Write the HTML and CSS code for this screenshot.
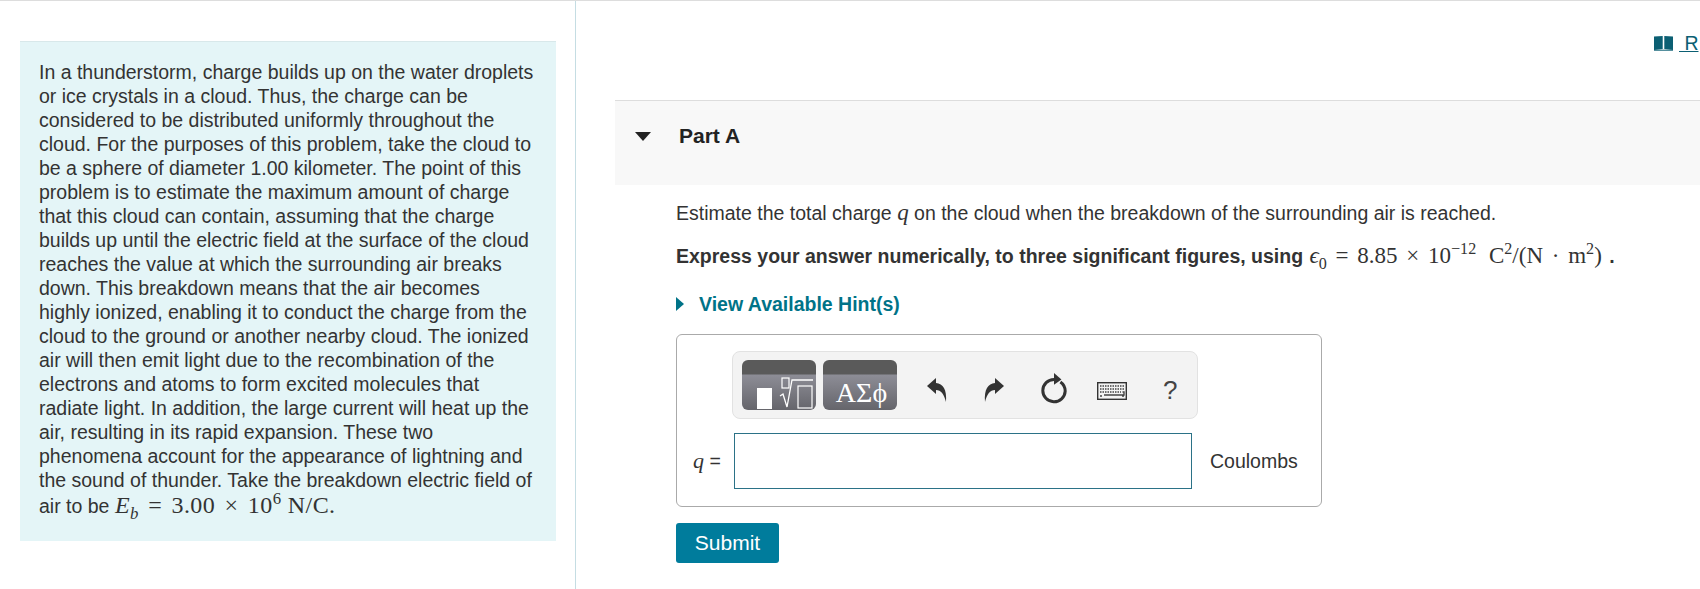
FILE: index.html
```html
<!DOCTYPE html>
<html lang="en">

<head>
    <meta charset="UTF-8">
    <meta name="viewport" content="width=device-width, initial-scale=1.0">
    <title>Part A</title>
    <link rel="stylesheet" href="styles.css">
</head>

<body>
    <div class="layout">
        <aside class="intro-col">
            <div class="intro">
                In a thunderstorm, charge builds up on the water droplets or ice crystals in a cloud. Thus, the charge can be considered to be distributed uniformly throughout the cloud. For the purposes of this problem, take the cloud to be a sphere of diameter 1.00 kilometer. The point of this problem is to estimate the maximum amount of charge that this cloud can contain, assuming that the charge builds up until the electric field at the surface of the cloud reaches the value at which the surrounding air breaks down. This breakdown means that the air becomes highly ionized, enabling it to conduct the charge from the cloud to the ground or another nearby cloud. The ionized air will then emit light due to the recombination of the electrons and atoms to form excited molecules that radiate light. In addition, the large current will heat up the air, resulting in its rapid expansion. These two phenomena account for the appearance of lightning and the sound of thunder. Take the breakdown electric field of air to be <span class="math math-big"><i>E<sub>b</sub></i> <span class="op">=</span> 3.00 <span class="op">×</span> 10<sup>6</sup> N/C.</span>
            </div>
        </aside>

        <main class="main-col">
            <div class="review-row">
                <svg class="book" viewBox="0 0 19 16" width="19" height="16">
                    <path d="M0 1.5 L8.7 1 V14 L0 15 Z M10.3 1 L19 1.5 V15 L10.3 14 Z" fill="#0b5f73" />
                    <path d="M0 15.2 H19" stroke="#0b5f73" stroke-width="1" />
                </svg>
                <a class="review-link" href="#">&nbsp;R</a>
            </div>

            <section class="part">
                <div class="part-head">
                    <span class="arrow-down"></span>
                    <h2>Part A</h2>
                </div>

                <div class="part-body">
                    <p class="question">Estimate the total charge <i class="math q">q</i> on the cloud when the breakdown of the surrounding air is reached.</p>
                    <p class="instruction"><b>Express your answer numerically, to three significant figures, using</b> <span class="math formula"><i>ϵ</i><sub>0</sub> <span class="op">=</span> 8.85 <span class="op">×</span> 10<sup>−12</sup> <span class="unit">C<sup>2</sup>/(N <span class="op-dot">·</span> m<sup>2</sup>)</span></span> <b class="period">.</b></p>
                    <a class="hint" href="#"><span class="arrow-right"></span>View Available Hint(s)</a>

                    <div class="answer-box">
                        <div class="toolbar">
                            <div class="tool-btn">
                                <svg viewBox="0 0 74 36" width="74" height="36">
                                    <rect x="15" y="14" width="15" height="21" fill="#fff" />
                                    <rect x="40" y="4" width="7" height="10" fill="none" stroke="#fff" stroke-width="1.2" />
                                    <path d="M38 22 L41 20 L45 33 L50 6 H71" fill="none" stroke="#fff" stroke-width="1.3" />
                                    <rect x="56" y="12" width="14" height="22" fill="none" stroke="#fff" stroke-width="1.2" />
                                </svg>
                            </div>
                            <div class="tool-btn"><span class="greek">ΑΣϕ</span></div>

                            <svg class="tool-icon undo" viewBox="0 0 22 26" width="22" height="26">
                                <path d="M1 9 L10 1 V6 C17 7 21 12 20 25 C18 17 15 13 10 13 V17 Z" fill="#333" />
                            </svg>
                            <svg class="tool-icon redo" viewBox="0 0 22 26" width="22" height="26">
                                <path d="M21 9 L12 1 V6 C5 7 1 12 2 25 C4 17 7 13 12 13 V17 Z" fill="#333" />
                            </svg>
                            <svg class="tool-icon reset" viewBox="0 0 26 30" width="28" height="32">
                                <path d="M13 6 A10.500 10.500 0 1 0 23.500 17 A10.500 10.500 0 0 0 19 8.500" fill="none" stroke="#333" stroke-width="2.800" />
                                <path d="M13 0 L20 6 L13 11 Z" fill="#333" />
                            </svg>
                            <svg class="tool-icon keys" viewBox="0 0 30 18" width="30" height="18">
                                <rect x="0.700" y="0.700" width="28.600" height="16.600" fill="none" stroke="#333" stroke-width="1.400" />
                                <path d="M3 4 H27 M3 7 H27 M3 10 H24" stroke="#444" stroke-width="1.500" stroke-dasharray="1.500 1" />
                                <path d="M25.500 10 H27 V13 H7 M3 14 H5 M25 14 H27" stroke="#444" stroke-width="1.400" fill="none" />
                            </svg>
                            <span class="help">?</span>
                        </div>

                        <div class="answer-row">
                            <label class="answer-label" for="answer"><i class="math">q</i> =</label>
                            <input type="text" id="answer" class="answer-input">
                            <span class="units">Coulombs</span>
                        </div>
                    </div>

                    <button type="button" class="submit">Submit</button>
                </div>
            </section>
        </main>
    </div>
</body>

</html>
```

FILE: styles.css
```css
html, body {
    height: 100%;
    margin: 0;
}

body {
    font-family: "Liberation Sans", Arial, sans-serif;
    font-size: 19.5px;
    line-height: 24px;
    color: #333;
    background-color: #fff;
    overflow: hidden;
}

.layout {
    display: flex;
    height: 100%;
    border-top: 1px solid #ddd;
    box-sizing: border-box;
}

.intro-col {
    width: 576px;
    flex: none;
    box-sizing: border-box;
    padding: 40px 19px 0 20px;
    border-right: 1px solid #c5dde3;
}

.intro {
    background-color: #e4f5f7;
    border-top: 1px solid #d8e8ea;
    padding: 18px 20px 19px 19px;
    height: 500px;
    box-sizing: border-box;
}

.math {
    font-family: "Liberation Serif", "Times New Roman", serif;
    font-size: 22px;
}

.math-big {
    font-size: 24px;
    letter-spacing: 0.4px;
    line-height: 27px;
}

.formula {
    font-size: 23px;
    margin-left: 1px;
}

.unit {
    margin-left: 7px;
}

.period {
    margin-left: 2px;
}

.math sub,
.math sup {
    font-size: 70%;
    line-height: 0;
}

.op {
    margin: 0 3px;
}

.op-dot {
    margin: 0 3px;
}

.q {
    font-size: 23px;
}

.main-col {
    flex: 1;
    min-width: 0;
    overflow: hidden;
    padding-left: 39px;
}

.review-row {
    height: 99px;
    display: flex;
    align-items: flex-start;
    padding-left: 1039px;
    box-sizing: border-box;
    padding-top: 30px;
    white-space: nowrap;
}

.book {
    flex: none;
    margin-top: 4px;
}

.review-link {
    color: #0b5f73;
    margin-left: 6px;
}

.part-head {
    display: flex;
    align-items: flex-start;
    height: 85px;
    box-sizing: border-box;
    background-color: #f8f8f8;
    border-top: 1px solid #ddd;
    padding: 23px 0 0 20px;
}

.part-head h2 {
    margin: 0;
    font-size: 21px;
    line-height: 24px;
    font-weight: bold;
    color: #222;
    margin-left: 28px;
}

.arrow-down {
    width: 0;
    height: 0;
    margin-top: 8px;
    border-left: 8.500px solid transparent;
    border-right: 8.500px solid transparent;
    border-top: 9px solid #222;
}

.part-body {
    padding-left: 61px;
}

.question {
    margin: 16px 0 0;
}

.instruction {
    margin: 19px 0 0;
    white-space: nowrap;
}

.hint {
    display: flex;
    align-items: center;
    margin-top: 24px;
    color: #007388;
    font-weight: bold;
    text-decoration: none;
}

.arrow-right {
    width: 0;
    height: 0;
    margin-right: 15px;
    border-top: 7px solid transparent;
    border-bottom: 7px solid transparent;
    border-left: 8px solid #007388;
}

.answer-box {
    width: 646px;
    height: 173px;
    margin-top: 18px;
    box-sizing: border-box;
    border: 1px solid #aaa;
    border-radius: 6px;
    padding: 16px 0 0 55px;
}

.toolbar {
    display: flex;
    align-items: center;
    width: 466px;
    height: 68px;
    box-sizing: border-box;
    padding-left: 9px;
    background-color: #f3f3f3;
    border: 1px solid #e2e2e2;
    border-radius: 8px;
}

.tool-btn {
    width: 74px;
    height: 50px;
    display: flex;
    align-items: flex-end;
    justify-content: center;
    margin-right: 7px;
    box-sizing: border-box;
    border-radius: 6px;
    background: linear-gradient(#5a5a5a 0, #5a5a5a 14px, #8d8d96 15px, #65656b 100%);
    color: #fff;
    overflow: hidden;
}

.greek {
    font-family: "Liberation Serif", serif;
    font-size: 28px;
    line-height: 34px;
    padding-left: 3px;
}

.tool-icon {
    flex: none;
    margin-top: 10px;
}

.undo {
    margin-left: 22px;
}

.redo {
    margin-left: 35px;
}

.reset {
    margin-left: 35px;
    margin-top: 8px;
}

.keys {
    margin-left: 29px;
    margin-top: 12px;
}

.help {
    margin-left: 36px;
    margin-top: 10px;
    font-size: 26px;
    color: #444;
}

.answer-row {
    display: flex;
    align-items: center;
    margin-top: 14px;
    margin-left: -40px;
}

.answer-label {
    width: 41px;
    margin-left: 1px;
}

.answer-input {
    width: 458px;
    height: 56px;
    box-sizing: border-box;
    border: 1px solid #2b7287;
    outline: none;
    padding: 0 8px;
}

.units {
    margin-left: 18px;
}

.submit {
    display: block;
    width: 103px;
    height: 40px;
    margin-top: 16px;
    border: none;
    border-radius: 3px;
    background-color: #007c9c;
    color: #fff;
    font-family: inherit;
    font-size: 21px;
    cursor: pointer;
}
```
